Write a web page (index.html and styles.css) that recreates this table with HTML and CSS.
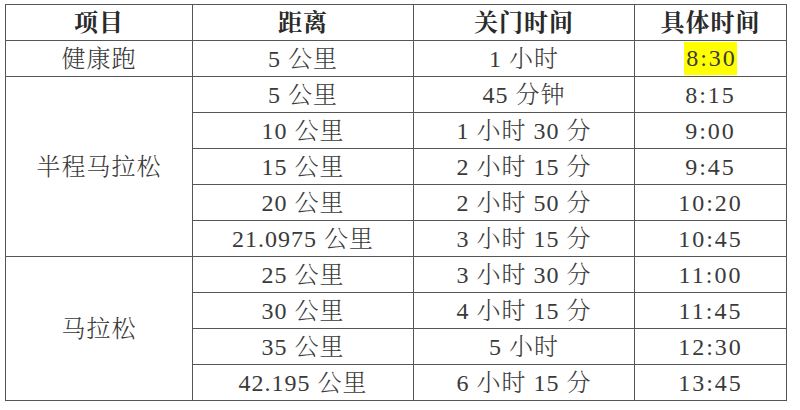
FILE: index.html
```html
<!DOCTYPE html>
<html lang="zh-CN">
<head>
<meta charset="utf-8">
<title>马拉松关门时间</title>
<link rel="stylesheet" href="styles.css">
</head>
<body>
<table class="schedule">
  <colgroup>
    <col class="c1"><col class="c2"><col class="c3"><col class="c4">
  </colgroup>
  <thead>
    <tr><th>项目</th><th>距离</th><th>关门时间</th><th>具体时间</th></tr>
  </thead>
  <tbody>
    <tr><td>健康跑</td><td>5 公里</td><td>1 小时</td><td class="t"><span class="hl">8:30</span></td></tr>
    <tr><td rowspan="5">半程马拉松</td><td>5 公里</td><td>45 分钟</td><td class="t">8:15</td></tr>
    <tr><td>10 公里</td><td>1 小时 30 分</td><td class="t">9:00</td></tr>
    <tr><td>15 公里</td><td>2 小时 15 分</td><td class="t">9:45</td></tr>
    <tr><td>20 公里</td><td>2 小时 50 分</td><td class="t">10:20</td></tr>
    <tr><td>21.0975 公里</td><td>3 小时 15 分</td><td class="t">10:45</td></tr>
    <tr><td rowspan="4">马拉松</td><td>25 公里</td><td>3 小时 30 分</td><td class="t">11:00</td></tr>
    <tr><td>30 公里</td><td>4 小时 15 分</td><td class="t">11:45</td></tr>
    <tr><td>35 公里</td><td>5 小时</td><td class="t">12:30</td></tr>
    <tr><td>42.195 公里</td><td>6 小时 15 分</td><td class="t">13:45</td></tr>
  </tbody>
</table>
</body>
</html>
```

FILE: styles.css
```css
html, body {
  margin: 0;
  padding: 0;
  background: #ffffff;
}
body {
  padding: 4px 0 0 5px;
}
.schedule {
  border-collapse: collapse;
  table-layout: fixed;
  width: 781px;
  font-family: "Liberation Serif", "Noto Serif CJK SC", "Noto Sans CJK SC", serif;
  font-size: 24px;
  color: #3a3a3a;
}
.c1 { width: 187px; }
.c2 { width: 221px; }
.c3 { width: 221px; }
.c4 { width: 152px; }
.schedule th,
.schedule td {
  border: 1px solid #555555;
  height: 35px;
  padding: 0;
  text-align: center;
  vertical-align: middle;
  line-height: 30px;
  letter-spacing: 1px;
  white-space: nowrap;
}
.schedule td {
  font-weight: 300;
}
.schedule th {
  font-weight: bold;
  color: #2a2a2a;
}
.schedule td.t {
  letter-spacing: 2px;
}
.hl {
  display: inline-block;
  background: #ffff00;
  height: 33px;
  line-height: 33px;
  vertical-align: middle;
  padding: 0 0 0 2px;
}
```
